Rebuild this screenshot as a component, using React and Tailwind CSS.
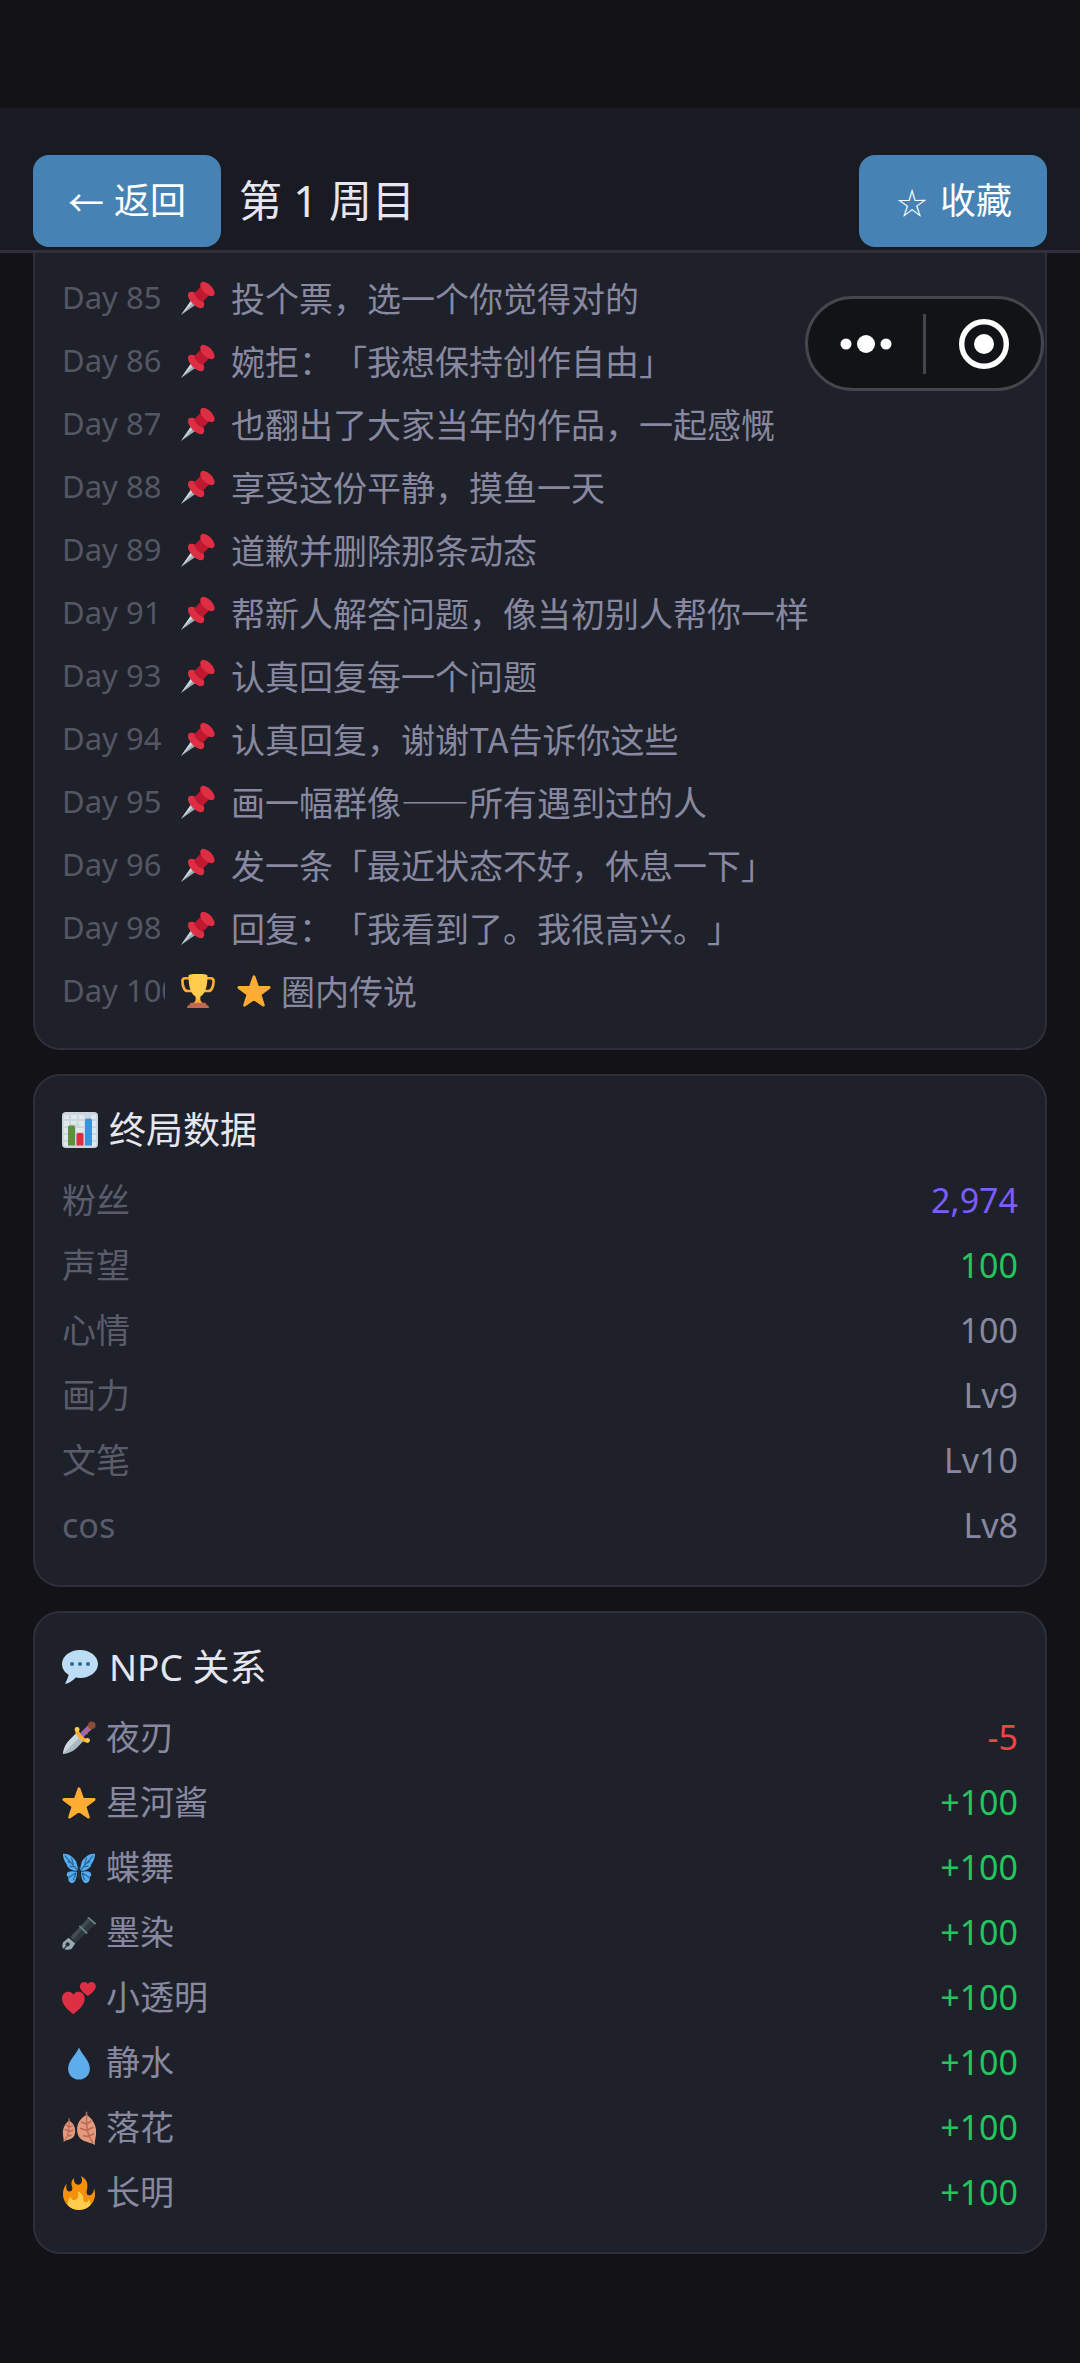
import React, { useState } from "react"

const LOGS = [
  { day: 85, text: "投个票，选一个你觉得对的" },
  { day: 86, text: "婉拒：「我想保持创作自由」" },
  { day: 87, text: "也翻出了大家当年的作品，一起感慨" },
  { day: 88, text: "享受这份平静，摸鱼一天" },
  { day: 89, text: "道歉并删除那条动态" },
  { day: 91, text: "帮新人解答问题，像当初别人帮你一样" },
  { day: 93, text: "认真回复每一个问题" },
  { day: 94, text: "认真回复，谢谢TA告诉你这些" },
  { day: 95, text: "画一幅群像——所有遇到过的人" },
  { day: 96, text: "发一条「最近状态不好，休息一下」" },
  { day: 98, text: "回复：「我看到了。我很高兴。」" },
  { day: 100, text: "圈内传说", ending: true },
]

const STATS = [
  { label: "粉丝", value: "2,974", color: "text-[#7c5cfc]" },
  { label: "声望", value: "100", color: "text-[#22c55e]" },
  { label: "心情", value: "100", color: "text-[#8888a0]" },
  { label: "画力", value: "Lv9", color: "text-[#8888a0]" },
  { label: "文笔", value: "Lv10", color: "text-[#8888a0]" },
  { label: "cos", value: "Lv8", color: "text-[#8888a0]" },
]

const NPCS = [
  { name: "夜刃", icon: "dagger", value: -5 },
  { name: "星河酱", icon: "star", value: 100 },
  { name: "蝶舞", icon: "butterfly", value: 100 },
  { name: "墨染", icon: "pen", value: 100 },
  { name: "小透明", icon: "hearts", value: 100 },
  { name: "静水", icon: "drop", value: 100 },
  { name: "落花", icon: "leaves", value: 100 },
  { name: "长明", icon: "fire", value: 100 },
]

const HEART = "M12 35C6 30 0 24 0 17c0-5 3-8 6.500-8 2.500 0 4.500 1.500 5.500 3.500C13 10.500 15 9 17.500 9c3.500 0 6.500 3 6.500 8 0 7-6 13-12 18z"
const LEAF = "M10 0C4 3 0 8 0 14c0 5 2 9 7 11 4 1.500 8 2 12 4-1-4 2-9 1-15C19 8 15 3 10 0z"

// Every emoji is drawn on a 36 x 36 grid
const EMOJI = {
  pin: (
    <>
      <path fill="#99AAB5" d="M0 36L11 20l5 5z" />
      <path fill="#CCD6DD" d="M0 36l11-16 2.500 2.500z" />
      <ellipse cx="16" cy="20" rx="5.500" ry="11" transform="rotate(-45 16 20)" fill="#DD2E44" />
      <path fill="#BE1931" d="M14 13l8-8 9 9-8 8c-4-1-8-5-9-9z" />
      <ellipse cx="28" cy="8.500" rx="5" ry="9.500" transform="rotate(-45 28 8.500)" fill="#DD2E44" />
    </>
  ),
  trophy: (
    <>
      <path fill="none" stroke="#FFAC33" strokeWidth="2.800" d="M10 4.500H4.500c-2 0-3 1-3 3C1.500 12 3 18 7 18h5M26 4.500h5.500c2 0 3 1 3 3 0 4.500-1.500 10.500-5.500 10.500h-5" />
      <path fill="#FFAC33" d="M15.500 21h5v6c0 2 2 3.500 4 5h-13c2-1.500 4-3 4-5z" />
      <path fill="#FFCC4D" d="M8 2c0-1.500 2-2 10-2s10 .500 10 2c0 11-2 18-7 21.500-1 .700-1.500 1.500-1.500 3.500h-3c0-2-.500-2.800-1.500-3.500C10 20 8 13 8 2z" />
      <path fill="#C1694F" d="M11 30.500h14c1.500 0 2 1 2 2.500h1c1 0 1.500 1 1.500 3h-23c0-2 .500-3 1.500-3h1c0-1.500.500-2.500 2-2.500z" />
    </>
  ),
  star: (
    <path
      fill="#FFAC33"
      stroke="#FFAC33"
      strokeWidth="3"
      strokeLinejoin="round"
      d="M18 3l3.900 11.100 12.100.200-9.700 7.200 3.600 11.500L18 26.100 8.100 33l3.600-11.500L2 14.300l12.100-.200z"
    />
  ),
  chart: (
    <>
      <rect width="36" height="36" rx="4" fill="#CCD6DD" />
      <path
        fill="#E1E8ED"
        d="M2 3h5v4H2zM9 3h6v4H9zM17 3h5v4h-5zM29 3h5v4h-5zM2 9h5v5H2zM9 9h6v3H9zM17 9h5v5h-5zM29 9h5v5h-5zM2 16h4v5H2zM14 16h8v4h-8zM30 16h4v5h-4zM2 23h4v5H2zM30 23h4v5h-4zM2 30h4v4H2zM30 30h4v4h-4z"
      />
      <path fill="#5C913B" d="M6 15c0-1 1-1.500 2-1.500h3c1 0 2 .500 2 1.500v18.500H6z" />
      <path fill="#DD2E44" d="M14.500 22.500c0-1 1-1.500 2-1.500h3c1 0 2 .500 2 1.500v11h-7z" />
      <path fill="#3B94D9" d="M23 8c0-1 1-1.500 2-1.500h3c1 0 2 .500 2 1.500v25.500h-7z" />
    </>
  ),
  speech: (
    <>
      <path
        fill="#BDDDF4"
        d="M18 1C8.059 1 0 7.268 0 15c0 4.368 2.574 8.268 6.604 10.835C6.080 28.144 4.859 31.569 3 35c5-.960 8.439-3.761 10.716-6.416C15.092 28.846 16.521 29 18 29c9.941 0 18-6.268 18-14S27.941 1 18 1z"
      />
      <circle cx="10" cy="15" r="2" fill="#2A6797" />
      <circle cx="18" cy="15" r="2" fill="#2A6797" />
      <circle cx="26" cy="15" r="2" fill="#2A6797" />
    </>
  ),
  dagger: (
    <>
      <path fill="#AAB8C2" d="M1 35c1-7 3-11 7-15l7-7 8 8-7 7c-4 4-8 6-15 7z" />
      <path fill="#CCD6DD" d="M1 35c1-7 3-11 7-15l7-7 4 4z" />
      <path stroke="#9266CC" strokeWidth="5.500" d="M20 16l10-10" />
      <path stroke="#C1694F" strokeWidth="2" d="M23 9.500l4 4M26.500 6l4 4" />
      <path fill="none" stroke="#FFAC33" strokeWidth="4" strokeLinecap="round" d="M16 10c0 3 1 4 4 7s4 4 7 4" />
      <circle cx="16" cy="9" r="2.600" fill="#FFCC4D" />
      <circle cx="27" cy="20.500" r="2.600" fill="#FFCC4D" />
      <circle cx="31.500" cy="4.500" r="4" fill="#8A4B38" />
    </>
  ),
  butterfly: (
    <>
      <path fill="#55ACEE" d="M1 3c5-1 11 3 14 8l2 8-1 2C9 21 5 17 5 14 3 12 1 7 1 3zM35 3c-5-1-11 3-14 8l-2 8 1 2c7 0 11-4 11-7 2-2 4-7 4-11z" />
      <path fill="#55ACEE" d="M16 22c-6-1-11-1-11 3 0 2 1 2 2 3-1 3 1 6 4 6 3 0 5-6 5-12zM20 22c6-1 11-1 11 3 0 2-1 2-2 3 1 3-1 6-4 6-3 0-5-6-5-12z" />
      <path fill="none" stroke="#2A6797" strokeWidth="1.200" d="M3 5l13 15M8 16l6 1M6 11l4 2M10 7l2 8M33 5L20 20M28 16l-6 1M30 11l-4 2M26 7l-2 8M15 23l-8 5M15 23l-3 8M21 23l8 5M21 23l3 8" />
      <path fill="none" stroke="#292F33" strokeWidth="2.400" d="M18 17v12" strokeLinecap="round" />
    </>
  ),
  pen: (
    <>
      <path fill="#2F383C" d="M9 22L27 3l8 6-21 20z" />
      <path fill="#414D53" d="M9 22L27 3l3 2-18 20z" />
      <path stroke="#66857F" strokeWidth="2" strokeLinecap="round" d="M19 11l7 7M28 2l7 6" />
      <path fill="#99AAB5" d="M7 23l7 6-4 6c-3 1-6 1-8 0s-2-4-1-7z" />
      <circle cx="6" cy="30" r="2.200" fill="#292F33" />
      <path stroke="#292F33" strokeWidth="1.300" d="M6 30l-4 5" />
    </>
  ),
  hearts: (
    <>
      <path fill="#DD2E44" d={HEART} transform="translate(0 3) scale(1 .92)" />
      <path fill="#DD2E44" d={HEART} transform="translate(19 -4) scale(.7 .57)" />
    </>
  ),
  drop: (
    <path fill="#5DADEC" d="M18 1.500C14 10 6.500 16 6.500 24c0 6.500 5 11.500 11.500 11.500S29.500 30.500 29.500 24C29.500 16 22 10 18 1.500z" />
  ),
  leaves: (
    <>
      <g transform="translate(16 4) scale(1 1.100)">
        <path fill="#E39B80" d={LEAF} />
        <path fill="none" stroke="#BF6952" strokeWidth="1.600" d="M10-3C10 8 9 18 17 27M10 9L4 7M10 9l5-3M10 15l-7-2M10 15l7-3M12 21l-6-1M12 21l6-3" />
      </g>
      <g transform="matrix(-.65 0 0 .78 14 10)">
        <path fill="#E39B80" d={LEAF} />
        <path fill="none" stroke="#BF6952" strokeWidth="2" d="M10-3C10 8 9 18 17 27M10 9L4 7M10 9l5-3M10 15l-7-2M10 15l7-3M12 21l-6-1" />
      </g>
    </>
  ),
  fire: (
    <>
      <path
        fill="#F4900C"
        d="M35 19c0-2.062-.367-4.039-1.040-5.868-.460 5.389-3.333 8.157-6.335 6.868-2.812-1.208-.917-5.917-.777-8.164.236-3.809-.012-8.169-6.931-11.794 2.875 5.500.333 8.917-2.333 9.125-2.958.231-5.667-2.542-4.667-7.042-3.238 2.386-3.332 6.402-2.333 9 1.042 2.708-.042 4.958-2.583 5.208-2.840.280-4.418-3.041-2.963-8.333C2.520 10.965 1 14.805 1 19c0 9.389 7.611 17 17 17s17-7.611 17-17z"
      />
      <path
        fill="#FFCC4D"
        d="M28.394 23.999c.148 3.084-2.561 4.293-4.019 3.709-2.106-.843-1.541-2.291-2.083-5.291s-2.625-5.083-5.708-6c2.250 6.333-1.247 8.667-3.080 9.084-1.872.426-3.753-.001-3.968-4.007C7.352 23.668 6 26.676 6 30c0 .368.023.730.055 1.090C9.125 34.124 13.342 36 18 36s8.875-1.876 11.945-4.910c.032-.360.055-.722.055-1.090 0-2.187-.584-4.236-1.606-6.001z"
      />
    </>
  ),
}

function Emoji({ name, className = "size-[34px]" }) {
  return (
    <svg viewBox="0 0 36 36" className={`shrink-0 ${className}`} aria-hidden="true">
      {EMOJI[name]}
    </svg>
  )
}

function Card({ icon, title, children }) {
  return (
    <section className="rounded-[27px] border-2 border-[#2e2f3a] bg-[#1e2129] p-[27px]">
      <h2 className="mb-[11px] flex items-center gap-[11px] text-[37px] leading-[54px] text-[#e6e6f0]">
        <Emoji name={icon} className="size-[36px]" />
        {title}
      </h2>
      {children}
    </section>
  )
}

function HeaderButton({ children, ...props }) {
  return (
    <button
      type="button"
      className="flex h-[92px] items-center gap-[10px] rounded-2xl bg-[#4682b4] px-[35px] text-[36px] leading-[54px] whitespace-nowrap text-white"
      {...props}
    >
      {children}
    </button>
  )
}

// Mini program capsule, floats over the page content
function Capsule() {
  return (
    <div className="absolute top-[296px] right-9 flex h-[95px] w-[239px] items-center rounded-full border-3 border-[#44464b] bg-[#121317]">
      <button type="button" aria-label="更多" className="flex h-full flex-1 items-center justify-center">
        <svg viewBox="0 0 52 20" className="h-5 w-[52px]" fill="#fff">
          <circle cx="6" cy="10" r="5.500" />
          <circle cx="26" cy="10" r="9" />
          <circle cx="46" cy="10" r="5.500" />
        </svg>
      </button>
      <span className="h-[60px] w-[3px] bg-[#44464b]" />
      <button type="button" aria-label="关闭" className="flex h-full flex-1 items-center justify-center">
        <svg viewBox="0 0 50 50" className="size-[50px]">
          <circle cx="25" cy="25" r="22.300" fill="none" stroke="#fff" strokeWidth="5.400" />
          <circle cx="25" cy="25" r="10" fill="#fff" />
        </svg>
      </button>
    </div>
  )
}

function App() {
  const [saved, setSaved] = useState(false)

  return (
    <div
      lang="zh-CN"
      className="relative min-h-screen bg-[#121217] pt-[108px] font-['Noto_Sans','Noto_Sans_CJK_SC',sans-serif]"
    >

      {/* HEADER */}
      <header className="flex items-center justify-between border-b-3 border-[#2e2f3a] bg-[#191a22] px-[33px] pt-[47px] pb-[3px]">
        <div className="flex items-center gap-[18px]">
          <HeaderButton>
            <span className="w-9 text-center font-['Noto_Sans_CJK_SC',sans-serif]">←</span>
            返回
          </HeaderButton>
          <h1 className="text-[43px] leading-[60px] text-[#e6e6f0]">第 1 周目</h1>
        </div>
        <HeaderButton aria-pressed={saved} onClick={() => setSaved(!saved)}>
          <span className="w-9 text-center font-['Noto_Sans_CJK_SC',sans-serif] text-[30px]">{saved ? "★" : "☆"}</span>
          收藏
        </HeaderButton>
      </header>

      <main className="flex flex-col gap-6 px-[33px] pb-[108px]">

        {/* DAY LOG */}
        <ul className="rounded-b-[27px] border-2 border-t-0 border-[#2e2f3a] bg-[#1e2129] px-[27px] pt-[13px] pb-[26px]">
          {LOGS.map(log => (
            <li key={log.day} className="flex items-center gap-4 leading-[63px]">
              <span className="w-[103px] shrink-0 overflow-hidden text-[31px] whitespace-nowrap text-[#555664]">
                Day {log.day}
              </span>
              <Emoji name={log.ending ? "trophy" : "pin"} />
              <span
                className={`flex items-center gap-[10px] font-['Noto_Sans_CJK_SC',sans-serif] text-[34px] text-[#8888a0] [text-spacing-trim:space-all]
                  ${log.ending ? "pl-[6px]" : ""}`}
              >
                {log.ending && <Emoji name="star" />}
                {log.text}
              </span>
            </li>
          ))}
        </ul>

        <Card icon="chart" title="终局数据">
          <dl>
            {STATS.map(stat => (
              <div key={stat.label} className="flex items-center justify-between text-[34px] leading-[65px]">
                <dt className="text-[#5b5c6b]">{stat.label}</dt>
                <dd className={stat.color}>{stat.value}</dd>
              </div>
            ))}
          </dl>
        </Card>

        <Card icon="speech" title="NPC 关系">
          <dl>
            {NPCS.map(npc => (
              <div key={npc.name} className="flex items-center justify-between text-[34px] leading-[65px]">
                <dt className="flex items-center gap-[10px] text-[#8888a0]">
                  <Emoji name={npc.icon} />
                  {npc.name}
                </dt>
                <dd className={npc.value < 0 ? "text-[#ef4444]" : "text-[#22c55e]"}>
                  {npc.value > 0 ? `+${npc.value}` : npc.value}
                </dd>
              </div>
            ))}
          </dl>
        </Card>
      </main>

      <Capsule />
    </div>
  )
}

export default App
